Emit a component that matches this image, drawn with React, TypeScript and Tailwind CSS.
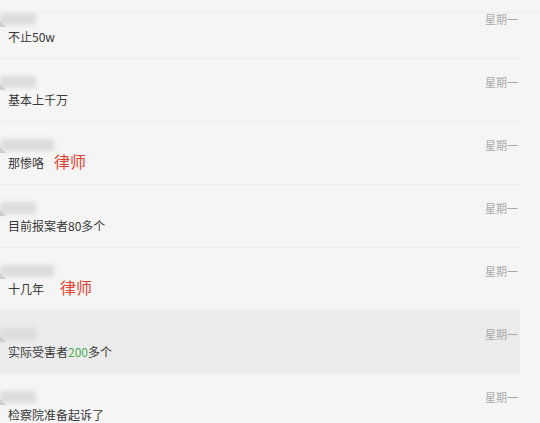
import React from 'react';

type Msg = {
  text: React.ReactNode;
  nameW: number;
  tag?: { text: string; gap: number };
  active?: boolean;
};

const font = { fontFamily: '"Microsoft YaHei", "Noto Sans CJK SC", "Liberation Sans", sans-serif' };

const msgs: Msg[] = [
  { text: '不止50w', nameW: 36 },
  { text: '基本上千万', nameW: 36 },
  { text: '那惨咯', nameW: 54, tag: { text: '律师', gap: 10 } },
  { text: '目前报案者80多个', nameW: 36 },
  { text: '十几年', nameW: 54, tag: { text: '律师', gap: 16 } },
  {
    text: (
      <>
        实际受害者<span className="text-[#4caf50]">200</span>多个
      </>
    ),
    nameW: 36,
    active: true,
  },
  { text: '检察院准备起诉了', nameW: 36 },
];

// 名前はぼかして表示
function BlurName({ w }: { w: number }) {
  return (
    <div className="relative h-[12px]" style={{ width: w }}>
      <div className="h-full w-full rounded-[3px] bg-[#dcdcdc] blur-[2px]" />
      <div className="absolute left-0 top-[8px] h-0 w-0 border-l-[6px] border-t-[6px] border-l-[#cdcdcd] border-t-transparent blur-[0.5px]" />
    </div>
  );
}

function Row({ m, first }: { m: Msg; first?: boolean }) {
  return (
    <div
      className={`w-[520px] ${first ? 'h-[46px]' : 'h-[63px] pt-[16px]'} ${
        m.active ? 'bg-[#ebebeb]' : ''
      } flex flex-col border-b border-[#e9e9e9] ${m.active ? 'border-transparent' : ''}`}
    >
      <div className={`flex h-[14px] items-center justify-between ${first ? '-mt-[1px]' : ''}`}>
        <BlurName w={m.nameW} />
        <span className="pr-[2px] text-[11px] leading-[14px] text-[#a9a9a9]">星期一</span>
      </div>
      <div className="mt-[3px] flex h-[16px] items-center pl-[8px] text-[12px] leading-[16px] text-[#383838]">
        <span>{m.text}</span>
        {m.tag && (
          <span className="-mt-[4px] text-[16px] leading-[16px] text-[#e8412f]" style={{ marginLeft: m.tag.gap }}>
            {m.tag.text}
          </span>
        )}
      </div>
    </div>
  );
}

export default function App() {
  return (
    <div className="h-[423px] w-[540px] overflow-hidden bg-[#f5f5f5]" style={font}>
      <div className="ml-[40px] h-[13px] border-b border-[#ebebeb]" />
      {msgs.map((m, i) => (
        <Row key={i} m={m} first={i === 0} />
      ))}
    </div>
  );
}
